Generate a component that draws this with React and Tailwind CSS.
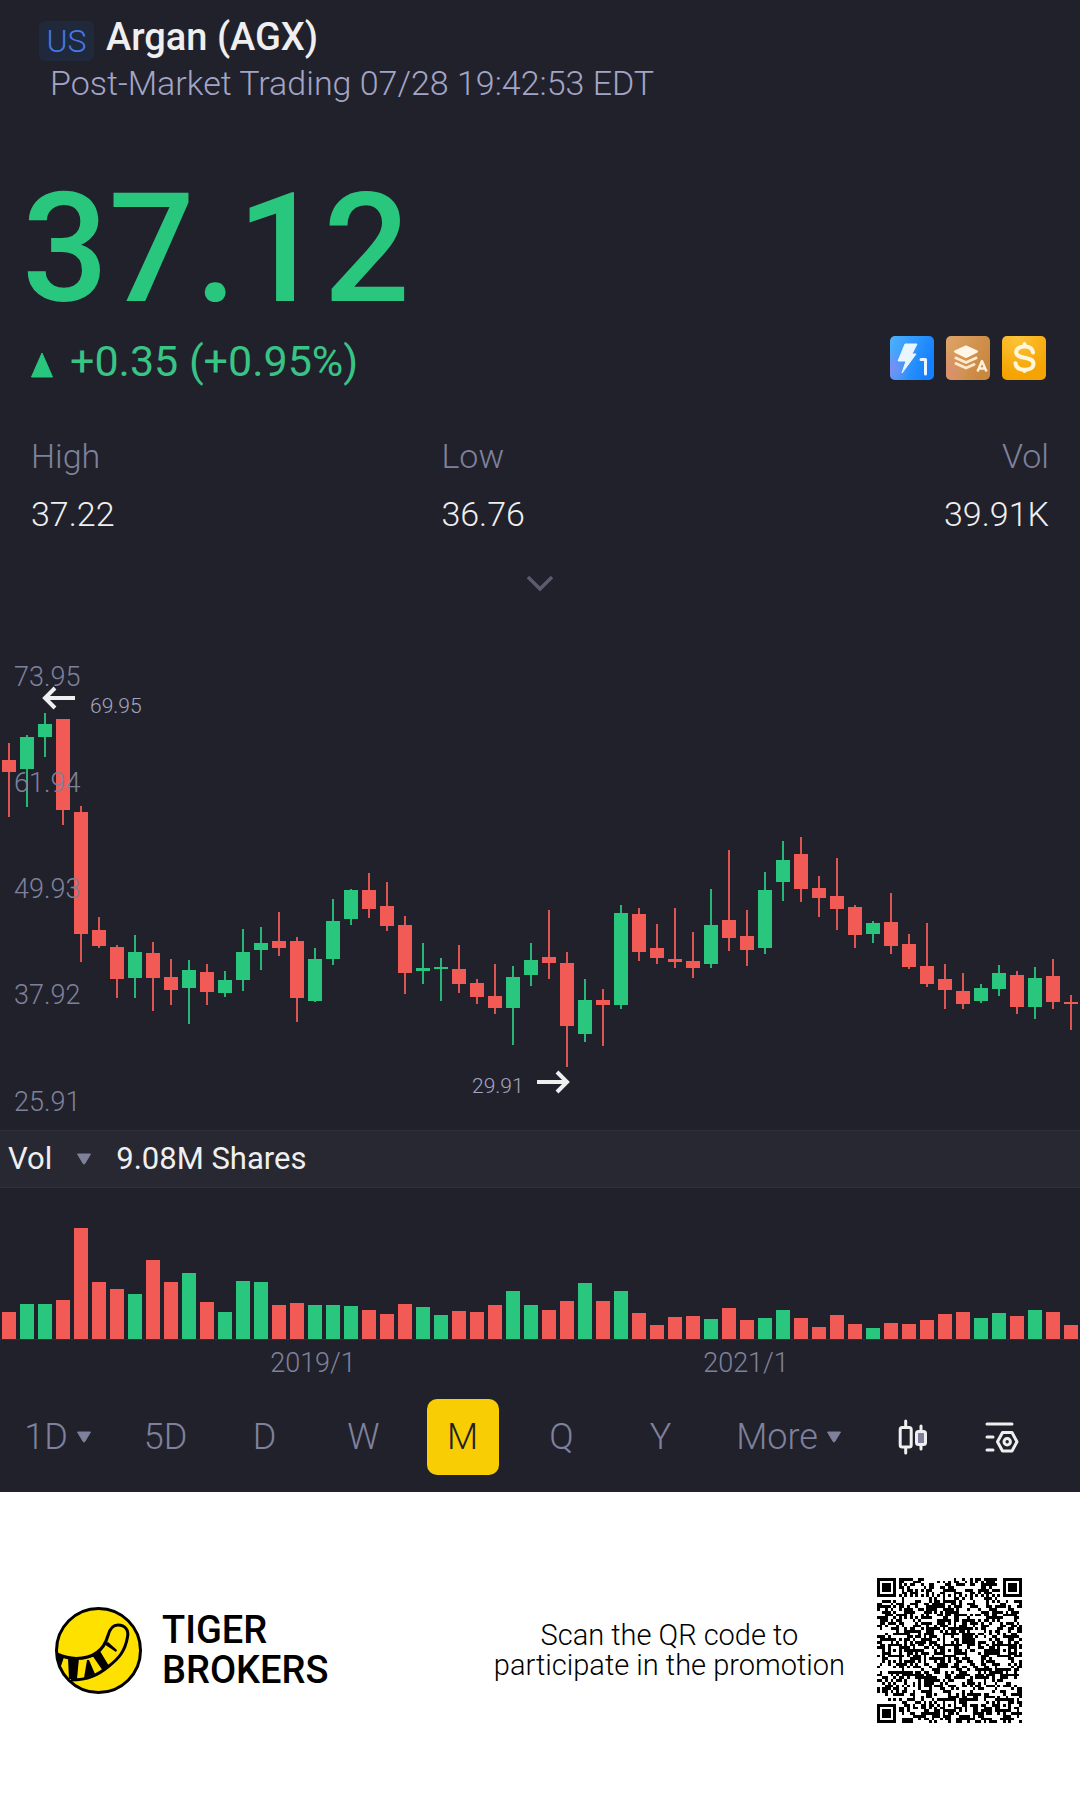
// src/App.jsx
import React from 'react';

const UP = '#29c77e';
const DOWN = '#f25a56';

// [direction, high, body top, body bottom, low, volume]
const candles = [
  ['d', 103, 120, 132, 177, 27],
  ['u', 95, 97, 129, 167, 35],
  ['u', 73, 84, 97, 117, 35],
  ['d', 79, 79, 170, 185, 39],
  ['d', 166, 172, 294, 322, 111],
  ['d', 277, 290, 306, 308, 57],
  ['d', 305, 307, 339, 358, 50],
  ['u', 295, 312, 338, 358, 45],
  ['d', 302, 313, 338, 371, 79],
  ['d', 319, 337, 350, 365, 57],
  ['u', 320, 330, 348, 384, 66],
  ['d', 324, 332, 352, 365, 37],
  ['u', 331, 340, 353, 357, 27],
  ['u', 289, 312, 340, 351, 58],
  ['u', 287, 303, 310, 330, 57],
  ['d', 272, 301, 308, 316, 34],
  ['d', 297, 301, 358, 382, 36],
  ['u', 308, 319, 361, 362, 34],
  ['u', 259, 281, 319, 325, 34],
  ['u', 249, 250, 279, 285, 33],
  ['d', 233, 250, 269, 278, 29],
  ['d', 242, 266, 286, 291, 25],
  ['d', 276, 285, 333, 354, 35],
  ['u', 303, 328, 331, 344, 32],
  ['u', 318, 327, 329, 361, 24],
  ['d', 305, 329, 344, 353, 28],
  ['d', 339, 343, 357, 364, 27],
  ['d', 324, 356, 368, 374, 34],
  ['u', 326, 337, 368, 405, 48],
  ['u', 303, 320, 335, 346, 34],
  ['d', 270, 317, 323, 339, 29],
  ['d', 312, 323, 386, 427, 38],
  ['u', 339, 360, 394, 402, 56],
  ['d', 349, 360, 365, 406, 38],
  ['u', 265, 273, 365, 369, 48],
  ['d', 268, 274, 312, 321, 26],
  ['d', 284, 308, 318, 324, 14],
  ['d', 268, 319, 322, 328, 22],
  ['d', 292, 321, 328, 338, 23],
  ['u', 249, 285, 324, 328, 20],
  ['d', 210, 280, 298, 311, 31],
  ['d', 270, 296, 310, 326, 19],
  ['u', 232, 250, 308, 314, 21],
  ['u', 201, 220, 242, 261, 29],
  ['d', 197, 214, 249, 262, 21],
  ['d', 236, 248, 258, 277, 12],
  ['d', 218, 256, 269, 290, 24],
  ['d', 265, 267, 295, 308, 15],
  ['u', 281, 283, 294, 303, 11],
  ['d', 253, 282, 306, 314, 16],
  ['d', 294, 304, 327, 329, 15],
  ['d', 283, 326, 344, 347, 19],
  ['d', 324, 339, 350, 369, 25],
  ['d', 333, 351, 364, 369, 27],
  ['u', 344, 348, 361, 363, 21],
  ['u', 325, 333, 349, 356, 26],
  ['d', 331, 335, 367, 374, 23],
  ['u', 327, 338, 367, 379, 29],
  ['d', 319, 336, 362, 369, 27],
  ['d', 355, 362, 364, 390, 14],
];

const priceLabels = [
  { y: 46, text: '73.95' },
  { y: 152, text: '61.94' },
  { y: 258, text: '49.93' },
  { y: 364, text: '37.92' },
  { y: 471, text: '25.91' },
];

const stats = [
  { label: 'High', value: '37.22', align: 'text-left' },
  { label: 'Low', value: '36.76', align: 'text-left' },
  { label: 'Vol', value: '39.91K', align: 'text-right' },
];

const periods = [
  { label: '1D', menu: true },
  { label: '5D' },
  { label: 'D' },
  { label: 'W' },
  { label: 'M', active: true },
  { label: 'Q' },
  { label: 'Y' },
  { label: 'More', menu: true },
];

function Caret({ className }) {
  return (
    <svg viewBox="0 0 16 12" className={className} aria-hidden="true">
      <path d="M1.500 1h13L8.800 10.600a1 1 0 0 1-1.600 0z" fill="#7f819c" stroke="#7f819c" strokeLinejoin="round" />
    </svg>
  );
}

function LevelBadge() {
  return (
    <svg viewBox="0 0 44 44" className="size-11" aria-label="Level 1">
      <defs>
        <linearGradient id="blue" x1="0" y1="0" x2="1" y2="0.4">
          <stop offset="0" stopColor="#4fb2fb" />
          <stop offset="1" stopColor="#1480ff" />
        </linearGradient>
        <radialGradient id="violet" cx="0" cy="0.75" r="0.45">
          <stop offset="0" stopColor="#7f8df2" />
          <stop offset="1" stopColor="#7f8df2" stopOpacity="0" />
        </radialGradient>
      </defs>
      <rect width="44" height="44" rx="5" fill="url(#blue)" />
      <rect width="44" height="44" rx="5" fill="url(#violet)" />
      <path d="M15 8h12l-5 10h4L12 37l4-12H8z" fill="#e9f5ff" stroke="#e9f5ff" strokeLinejoin="round" />
      <path d="M31 23.500h4.500V38" fill="none" stroke="#e9f5ff" strokeWidth="3" strokeLinecap="round" strokeLinejoin="round" />
    </svg>
  );
}

function LayersBadge() {
  return (
    <svg viewBox="0 0 44 44" className="size-11" aria-label="Grade A">
      <defs>
        <linearGradient id="bronze" x1="0" y1="0" x2="1" y2="0.5">
          <stop offset="0" stopColor="#dfa468" />
          <stop offset="1" stopColor="#c98840" />
        </linearGradient>
        <radialGradient id="rose" cx="0" cy="0.8" r="0.5">
          <stop offset="0" stopColor="#d98f70" />
          <stop offset="1" stopColor="#d98f70" stopOpacity="0" />
        </radialGradient>
      </defs>
      <rect width="44" height="44" rx="5" fill="url(#bronze)" />
      <rect width="44" height="44" rx="5" fill="url(#rose)" />
      <path d="M20 10.500l11 5-11 5.500-11-5.500z" fill="#fff6e8" stroke="#fff6e8" strokeWidth="2" strokeLinejoin="round" />
      <path d="M10 22l10 4.500L30 22M10 27.500L20 32l8-3.500" fill="none" stroke="#fde9cd" strokeWidth="3" strokeLinecap="round" strokeLinejoin="round" />
      <path d="M31.500 35.500l4.500-10.500 4.500 10.500M33 32.500h6" fill="none" stroke="#fff2df" strokeWidth="2.400" strokeLinejoin="round" />
    </svg>
  );
}

function DollarBadge() {
  return (
    <svg viewBox="0 0 44 44" className="size-11" aria-label="Dividend">
      <defs>
        <radialGradient id="gold" cx="0.35" cy="0" r="0.9">
          <stop offset="0" stopColor="#fcc53c" />
          <stop offset="1" stopColor="#f5a300" />
        </radialGradient>
      </defs>
      <rect width="44" height="44" rx="5" fill="url(#gold)" />
      <path
        d="M31 16.500c-.5-4-4-6-8.500-6s-8.300 2-8.300 5.700c0 7.800 17.300 3.300 17.300 11.500 0 4-4 6-8.800 6-5 0-8.700-2.200-9.200-6.500"
        fill="none"
        stroke="#fff6dc"
        strokeWidth="4"
        strokeLinecap="round"
      />
      <path d="M22.500 8v2M22.500 34v1" stroke="#fff6dc" strokeWidth="4" strokeLinecap="round" />
    </svg>
  );
}

function PriceChart() {
  return (
    <svg viewBox="0 0 1080 490" className="mt-[46px] block w-full font-light" role="img" aria-label="Monthly price">
      {candles.map(([dir, high, top, bottom, low], i) => {
        const color = dir === 'u' ? UP : DOWN;
        return (
          <g key={i} fill={color}>
            <rect x={i * 18 + 8} y={high} width="2" height={low - high} opacity="0.9" />
            <rect x={i * 18 + 2} y={top} width="14" height={bottom - top} />
          </g>
        );
      })}
      {priceLabels.map((label) => (
        <text key={label.text} x="14" y={label.y} fontSize="27" fill="#7f819c">
          {label.text}
        </text>
      ))}
      <g fill="none" stroke="#efefef" strokeWidth="4">
        <path d="M75 58H46M55 48L45 58l10 10" />
        <path d="M537 442h29M557 432l10 10-10 10" />
      </g>
      <g fontSize="21" fill="#a3a5c2">
        <text x="90" y="73">69.95</text>
        <text x="472" y="453">29.91</text>
      </g>
    </svg>
  );
}

function VolumeChart() {
  return (
    <svg viewBox="0 0 1080 211" className="block w-full font-light" role="img" aria-label="Monthly volume">
      <rect y="151" width="1080" height="1" fill="#2f303c" />
      {candles.map(([dir, , , , , volume], i) => (
        <rect key={i} x={i * 18 + 2} y={151 - volume} width="14" height={volume} fill={dir === 'u' ? UP : DOWN} />
      ))}
      <g fontSize="27" fill="#7f819c" textAnchor="middle">
        <text x="313" y="184">2019/1</text>
        <text x="746" y="184">2021/1</text>
      </g>
    </svg>
  );
}

function TigerLogo() {
  return (
    <svg viewBox="0 0 87 87" className="size-[87px]" aria-hidden="true">
      <circle cx="43.500" cy="43.500" r="42" fill="#ffe100" stroke="#000" strokeWidth="3" />
      <path
        d="M2 47c7 3 12 4.500 19 4.500 18 0 28-9 32-23C55 21 58 18 63 18c7 0 11 5 9.500 12C70 45 63 52 54 59c-11 9-21 14-38 14"
        fill="none"
        stroke="#000"
        strokeWidth="3"
      />
      <path d="M1 46l8 4-4 12zM13 51h11l-2 21h-8zM32 53l2 0 6 14-11 4zM37 48l8-4 9 15-6 5zM49 37l4-2 9 8-1 2z" />
    </svg>
  );
}

const QR_SIZE = 53;

function inFinder(x, y) {
  return (x < 8 && y < 8) || (x > QR_SIZE - 9 && y < 8) || (x < 8 && y > QR_SIZE - 9);
}

function ringAt(x, y, cx, cy) {
  return Math.max(Math.abs(x - cx), Math.abs(y - cy));
}

function buildQr() {
  const last = QR_SIZE - 4;
  const aligns = [
    [26, 6], [6, 26], [26, 26], [46, 26], [26, 46], [46, 46],
  ];
  let seed = 7281942;
  let d = '';
  for (let y = 0; y < QR_SIZE; y++) {
    for (let x = 0; x < QR_SIZE; x++) {
      seed = (seed * 1103515245 + 12345) % 2147483648;
      let dark = (seed >> 16) % 2 === 0;
      if (x === 6 || y === 6) dark = (x + y) % 2 === 0;
      const align = aligns.find(([ax, ay]) => ringAt(x, y, ax, ay) <= 2);
      if (align) dark = ringAt(x, y, align[0], align[1]) !== 1;
      if (inFinder(x, y)) {
        const ring = ringAt(x, y, x < 8 ? 3 : last, y < 8 ? 3 : last);
        dark = ring !== 2 && ring !== 4;
      }
      if (dark) d += `M${x} ${y}h1v1h-1z`;
    }
  }
  return d;
}

const qrPath = buildQr();

export default function App() {
  return (
    <div className="min-h-screen bg-white font-['Roboto',sans-serif]">
      <main className="bg-[#21212b] pb-[17px]">
        <header className="pt-[17px]">
          <div className="flex items-start gap-3 pl-[39px]">
            <span className="mt-1 flex h-10 w-[55px] items-center justify-center rounded-md bg-[#20283c] text-[32px] font-light text-[#4479e4]">
              US
            </span>
            <h1 className="text-[38px] leading-10 font-medium text-[#efefef]">Argan (AGX)</h1>
          </div>
          <p className="pl-[50px] text-[34px] leading-[44px] font-light text-[#a3a5c6]">
            Post-Market Trading 07/28 19:42:53 EDT
          </p>
        </header>

        <section className="mt-16 px-[30px]">
          <p className="-ml-2 text-[152px] leading-[160px] font-medium text-[#29c77e]">37.12</p>
          <div className="mt-1 flex h-14 items-center">
            <svg viewBox="0 0 24 28" className="mt-2 h-7 w-6" aria-hidden="true">
              <path d="M12 2l10.500 24h-21z" fill={UP} stroke={UP} strokeLinejoin="round" />
            </svg>
            <p className="ml-4 text-[43px] text-[#38c485]">+0.35 (+0.95%)</p>
            <div className="mr-1 ml-auto flex gap-3 pb-1.5">
              <LevelBadge />
              <LayersBadge />
              <DollarBadge />
            </div>
          </div>
        </section>

        <dl className="mt-[43px] grid grid-cols-[410fr_410fr_197fr] px-[31px] text-[34px] leading-[48px] font-light">
          {stats.map((stat) => (
            <div key={stat.label} className={`flex flex-col gap-2.5 ${stat.align}`}>
              <dt className="text-[#7f819c]">{stat.label}</dt>
              <dd className="text-[#efefef]">{stat.value}</dd>
            </div>
          ))}
        </dl>

        <button type="button" aria-label="Show more" className="mx-auto mt-8 block">
          <svg viewBox="0 0 32 24" className="h-6 w-8" aria-hidden="true">
            <path d="M4 7l12 12L28 7" fill="none" stroke="#5a5b6e" strokeWidth="3.500" />
          </svg>
        </button>

        <PriceChart />

        <div className="flex h-[58px] items-center border-y border-[#2f303c] bg-[#282832] pl-2 text-[31px] text-[#efefef]">
          <button type="button" className="flex items-center gap-6">
            Vol
            <Caret className="h-3 w-4" />
          </button>
          <span className="ml-6">9.08M Shares</span>
        </div>

        <VolumeChart />

        <nav className="grid h-[76px] grid-cols-[116fr_99fr_99fr_99fr_99fr_99fr_99fr_158fr_90fr_88fr] pr-[34px] text-[36px] font-light text-[#7f819c]">
          {periods.map((period) => (
            <button
              key={period.label}
              type="button"
              className={
                period.active
                  ? 'w-[72px] justify-self-center rounded-[10px] bg-[#f8cd03] text-[#21212b]'
                  : 'flex items-center justify-center gap-2'
              }
            >
              {period.label}
              {period.menu && <Caret className="h-3 w-4" />}
            </button>
          ))}
          <button type="button" aria-label="Chart type" className="flex items-center justify-center">
            <svg viewBox="0 0 32 36" className="h-9 w-8" fill="none" stroke="#efefef" strokeWidth="3" strokeLinecap="round" aria-hidden="true">
              <rect x="3.200" y="8.500" width="11" height="19.500" rx="2" />
              <path d="M8.700 2v6M8.700 28.500V34M24 7v5M24 25.500V30" />
              <rect x="19.500" y="12.500" width="9" height="13" rx="2" fill="#7f819c" />
            </svg>
          </button>
          <button type="button" aria-label="Chart settings" className="flex items-center justify-center">
            <svg viewBox="0 0 36 32" className="h-8 w-9" fill="none" stroke="#efefef" strokeWidth="3" strokeLinecap="round" strokeLinejoin="round" aria-hidden="true">
              <path d="M3 3h25M3 16h6M3 29h6" />
              <path d="M18.500 11.500h9.500l5 9.200-5 9.300h-9.500l-5-9.300z" />
              <circle cx="23.200" cy="20.700" r="3.200" />
            </svg>
          </button>
        </nav>
      </main>

      <footer className="flex h-[316px] items-center justify-between pr-[58px] pl-[55px] text-black">
        <div className="flex items-center gap-5">
          <TigerLogo />
          <p className="text-[38px] leading-10 font-medium">
            TIGER
            <br />
            BROKERS
          </p>
        </div>
        <div className="flex items-center gap-8">
          <p className="text-center text-[29px] leading-[30px] font-light">
            Scan the QR code to
            <br />
            participate in the promotion
          </p>
          <svg viewBox="0 0 53 53" className="size-[145px]" shapeRendering="crispEdges" role="img" aria-label="QR code">
            <path d={qrPath} />
          </svg>
        </div>
      </footer>
    </div>
  );
}
